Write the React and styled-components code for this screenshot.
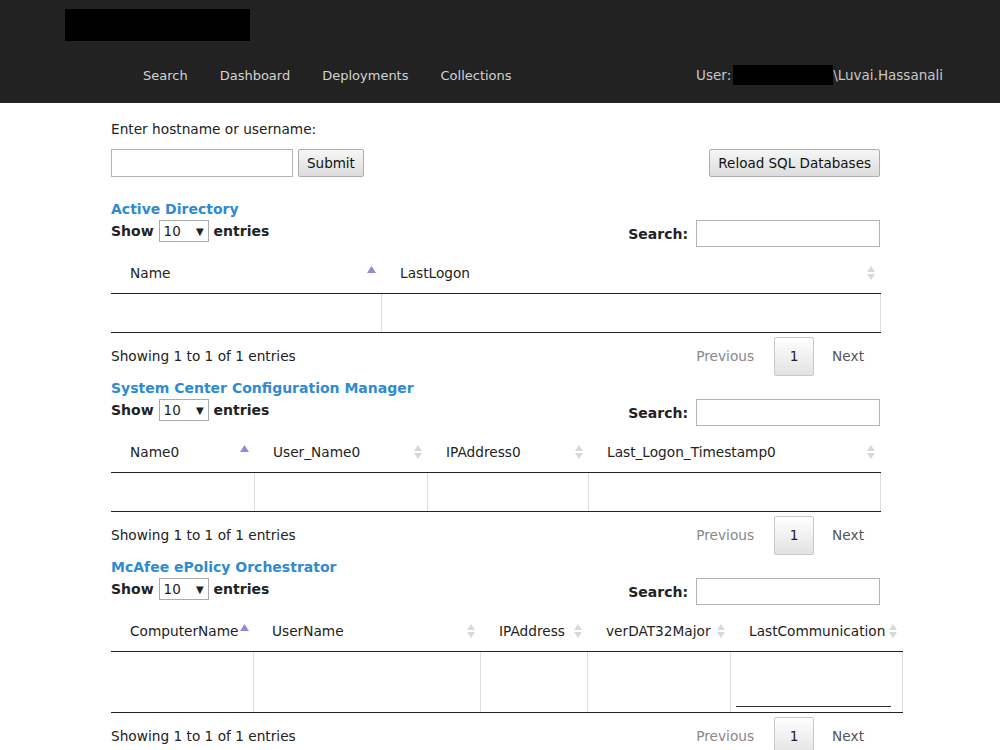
import React from "react";
import styled, { createGlobalStyle } from "styled-components";

const GlobalStyle = createGlobalStyle`
  body {
    margin: 0;
    background: #fff;
    font-family: "DejaVu Sans", Verdana, sans-serif;
    font-size: 13.7px;
    color: #222;
  }
`;

const Header = styled.header`
  height: 103px;
  box-sizing: border-box;
  background: #222;
  padding: 9px 57px 0 65px;
`;

const Logo = styled.div`
  width: 185px;
  height: 32px;
  background: #000;
`;

const NavBar = styled.nav`
  display: flex;
  justify-content: space-between;
  align-items: center;
  margin-top: 24px;
  padding-left: 62px;
  height: 20px;
`;

const NavLinks = styled.div`
  display: flex;
`;

const NavLink = styled.a`
  color: #d2d2d2;
  font-size: 13px;
  padding: 0 16px;
  text-decoration: none;
`;

const UserInfo = styled.div`
  display: flex;
  align-items: center;
  color: #c8c8c8;
  font-size: 13.5px;
`;

const Redacted = styled.span`
  display: inline-block;
  width: 100px;
  height: 20px;
  background: #000;
  margin-left: 2px;
`;

const Main = styled.main`
  width: 769px;
  padding: 18px 0 0 111px;
`;

const Label = styled.div`
  line-height: 16px;
  color: #222;
`;

const FormRow = styled.div`
  display: flex;
  align-items: center;
  margin-top: 12px;
  height: 28px;
`;

const TextInput = styled.input`
  box-sizing: border-box;
  height: ${(p) => p.$h || 28}px;
  width: ${(p) => p.$w}px;
  border: 1px solid #b4b4b4;
  background: #fff;
  padding: 0 4px;
  font: inherit;
`;

const Button = styled.button`
  box-sizing: border-box;
  height: 28px;
  padding: 0 8px;
  margin-left: ${(p) => p.$ml || 0};
  border: 1px solid #adadad;
  border-radius: 2px;
  background: linear-gradient(#f6f6f6, #dcdcdc);
  font: inherit;
  font-size: 13.5px;
  color: #111;
`;

const Section = styled.section`
  margin-top: ${(p) => p.$mt}px;
`;

const Title = styled.div`
  color: #2e8bd2;
  font-weight: bold;
  font-size: 14px;
  line-height: 18px;
`;

const Controls = styled.div`
  display: flex;
  justify-content: space-between;
  align-items: flex-start;
  height: 41px;
`;

const Length = styled.div`
  display: flex;
  align-items: center;
  font-weight: bold;
  font-size: 14px;
  margin-top: 2px;
  gap: 5px;
`;

const SelectBox = styled.span`
  box-sizing: border-box;
  display: flex;
  justify-content: space-between;
  align-items: center;
  width: 50px;
  height: 22px;
  padding: 0 4px 0 4px;
  border: 1px solid #aaa;
  background: #fff;
  font-weight: normal;
  font-size: 13.5px;
  & > span {
    font-size: 10px;
  }
`;

const Filter = styled.div`
  display: flex;
  align-items: center;
  gap: 8px;
  font-weight: bold;
  font-size: 14px;
  margin-top: 2px;
`;

const Table = styled.table`
  width: ${(p) => p.$w}px;
  table-layout: fixed;
  border-collapse: collapse;
`;

const Th = styled.th`
  padding: 6px 5px 12px 19px;
  line-height: 16px;
  font-weight: normal;
  text-align: left;
  vertical-align: top;
  color: #222;
  border-bottom: 1px solid #222;
`;

const ThInner = styled.div`
  display: flex;
  justify-content: space-between;
  align-items: ${(p) => (p.$asc ? "flex-start" : "center")};
  white-space: nowrap;
  & > span {
    overflow: visible;
  }
  & > svg {
    flex: none;
    margin-left: 2px;
    margin-top: ${(p) => (p.$asc ? "1px" : "0")};
  }
`;

const Td = styled.td`
  height: ${(p) => p.$h}px;
  padding: 0;
  border-right: 1px solid #ddd;
  border-bottom: 1px solid #222;
  vertical-align: bottom;
`;

const Underline = styled.div`
  margin: 0 11px 5px 5px;
  border-bottom: 1px solid #333;
`;

const Footer = styled.div`
  display: flex;
  justify-content: space-between;
  align-items: center;
  height: 46px;
`;

const Pager = styled.div`
  display: flex;
  align-items: center;
  padding-right: 16px;
  font-size: 13.7px;
`;

const PageLink = styled.span`
  color: ${(p) => (p.$disabled ? "#888" : "#555")};
`;

const PageButton = styled.span`
  box-sizing: border-box;
  display: flex;
  align-items: center;
  justify-content: center;
  width: 40px;
  height: 39px;
  margin: 0 18px 0 20px;
  border: 1px solid #c8c8c8;
  border-radius: 2px;
  background: linear-gradient(#fff, #e2e2e2);
  color: #222;
`;

const SortAsc = () => (
  <svg width="9" height="7" viewBox="0 0 9 7">
    <polygon points="0,7 4.5,0 9,7" fill="#8c8cd8" />
  </svg>
);

const SortBoth = () => (
  <svg width="8" height="14" viewBox="0 0 8 14">
    <polygon points="0,6 4,0 8,6" fill="#d8d8d8" />
    <polygon points="0,8 4,14 8,8" fill="#d8d8d8" />
  </svg>
);

const sections = [
  {
    title: "Active Directory",
    width: 769,
    rowHeight: 38,
    columns: [
      { label: "Name", width: 270, asc: true },
      { label: "LastLogon", width: 499 },
    ],
  },
  {
    title: "System Center Configuration Manager",
    width: 769,
    rowHeight: 38,
    columns: [
      { label: "Name0", width: 143, asc: true },
      { label: "User_Name0", width: 173 },
      { label: "IPAddress0", width: 161 },
      { label: "Last_Logon_Timestamp0", width: 292 },
    ],
  },
  {
    title: "McAfee ePolicy Orchestrator",
    width: 791,
    rowHeight: 60,
    underline: true,
    columns: [
      { label: "ComputerName", width: 142, asc: true },
      { label: "UserName", width: 227 },
      { label: "IPAddress", width: 107 },
      { label: "verDAT32Major", width: 143 },
      { label: "LastCommunication", width: 172 },
    ],
  },
];

function DataSection({ section, first }) {
  const last = section.columns.length - 1;
  return (
    <Section $mt={first ? 23 : 0}>
      <Title>{section.title}</Title>
      <Controls>
        <Length>
          Show
          <SelectBox>
            10 <span>▼</span>
          </SelectBox>
          entries
        </Length>
        <Filter>
          Search:
          <TextInput $w={184} $h={27} />
        </Filter>
      </Controls>
      <Table $w={section.width}>
        <colgroup>
          {section.columns.map((c) => (
            <col key={c.label} style={{ width: c.width }} />
          ))}
        </colgroup>
        <thead>
          <tr>
            {section.columns.map((c) => (
              <Th key={c.label}>
                <ThInner $asc={c.asc}>
                  <span>{c.label}</span>
                  {c.asc ? <SortAsc /> : <SortBoth />}
                </ThInner>
              </Th>
            ))}
          </tr>
        </thead>
        <tbody>
          <tr>
            {section.columns.map((c, i) => (
              <Td key={c.label} $h={section.rowHeight}>
                {section.underline && i === last ? <Underline /> : null}
              </Td>
            ))}
          </tr>
        </tbody>
      </Table>
      <Footer>
        <span>Showing 1 to 1 of 1 entries</span>
        <Pager>
          <PageLink $disabled>Previous</PageLink>
          <PageButton>1</PageButton>
          <PageLink>Next</PageLink>
        </Pager>
      </Footer>
    </Section>
  );
}

export default function App() {
  return (
    <>
      <GlobalStyle />
      <Header>
        <Logo />
        <NavBar>
          <NavLinks>
            <NavLink>Search</NavLink>
            <NavLink>Dashboard</NavLink>
            <NavLink>Deployments</NavLink>
            <NavLink>Collections</NavLink>
          </NavLinks>
          <UserInfo>
            User:
            <Redacted />
            \Luvai.Hassanali
          </UserInfo>
        </NavBar>
      </Header>
      <Main>
        <Label>Enter hostname or username:</Label>
        <FormRow>
          <TextInput $w={182} />
          <Button $ml="5px">Submit</Button>
          <Button $ml="auto">Reload SQL Databases</Button>
        </FormRow>
        {sections.map((s, i) => (
          <DataSection key={s.title} section={s} first={i === 0} />
        ))}
      </Main>
    </>
  );
}
